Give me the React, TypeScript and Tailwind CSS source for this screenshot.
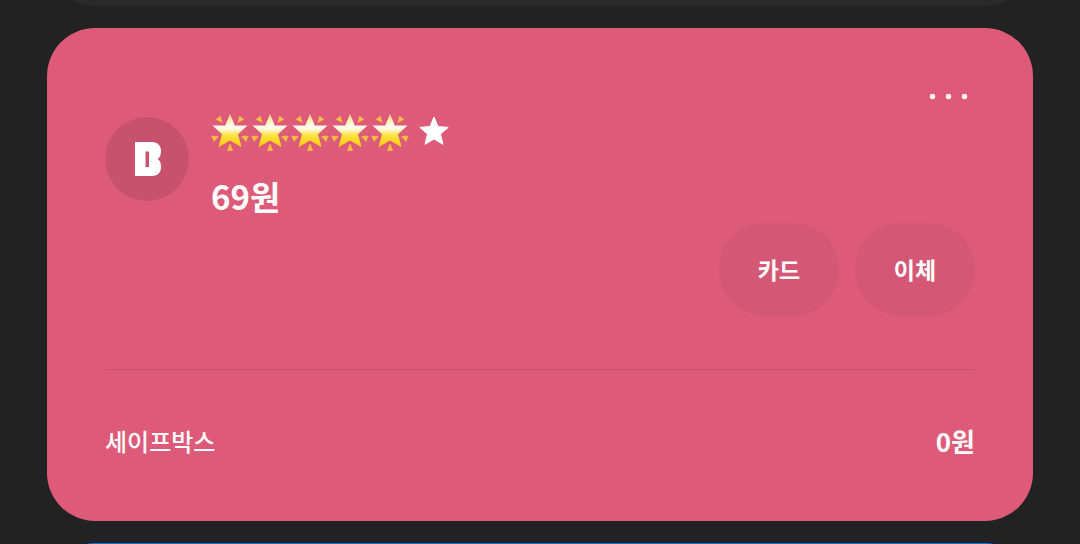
import React from "react";

const BankLogo: React.FC = () => (
  <svg width="28" height="34" viewBox="0 0 28 34" fill="#fff" aria-hidden="true">
    <path
      fillRule="evenodd"
      d="M2 0H19C25 0 28 4 28 9C28 13 27 15.500 24.500 17C27 18.500 28 21 28 25C28 30 25 34 19 34H2ZM12.500 9.500V25H16V9.500Z"
    />
  </svg>
);

const GlowingStar: React.FC = () => (
  <svg width="38" height="40" viewBox="0 0 38 40" aria-hidden="true">
    <defs>
      <linearGradient id="starFill" x1="0" y1="0" x2="0" y2="1">
        <stop offset="0" stopColor="#ffd65a" />
        <stop offset="0.2" stopColor="#fff0b8" />
        <stop offset="0.42" stopColor="#fffdf4" />
        <stop offset="0.65" stopColor="#ffe23a" />
        <stop offset="1" stopColor="#fdc90d" />
      </linearGradient>
    </defs>
    <path
      d="M19 2L23.800 13.500H36.500L27 22.200L30.600 35.300L19 28.400L7.400 35.300L11 22.200L1.500 13.500H14.200Z"
      fill="url(#starFill)"
    />
    <g fill="#fbbb45" stroke="#fbbb45" strokeWidth="0.4" strokeLinejoin="round">
      <path d="M5 7.500L9.300 4L11.300 10.500Z" />
      <path d="M33 7.500L28.700 4L26.700 10.500Z" />
      <path d="M0.600 24L7.600 24.300L3 29.600Z" />
      <path d="M37.400 24L30.400 24.300L35 29.600Z" />
      <path d="M19 32L21.800 38.700H16.200Z" />
    </g>
  </svg>
);

const FavoriteStar: React.FC = () => (
  <svg width="30" height="30" viewBox="0 0 30 30" fill="#fff" stroke="#fff" strokeLinejoin="round" aria-hidden="true">
    <path d="M15 0L19 9.500L29.200 10.400L21.500 17L24 27.300L15 22L6 27.300L8.500 17L0.800 10.400L11 9.500Z" />
  </svg>
);

const App: React.FC = () => {
  const actions = ["카드", "이체"];

  return (
    <main className="h-screen overflow-hidden bg-[#222222] px-[47px] text-white font-['Noto_Sans_CJK_KR','Noto_Sans',sans-serif]">
      {/* end of the card above */}
      <div className="-mt-[90px] h-24 rounded-[48px] bg-[#2a2a2a]" />

      <section className="mt-[22px] rounded-[48px] bg-[#dd5b79] px-[58px] pt-[58px] pb-[60px]">
        <div className="flex items-start">
          <div className="mt-[31px] flex size-[84px] shrink-0 items-center justify-center rounded-full bg-[#c8526e]">
            <BankLogo />
          </div>

          <div className="mt-[26px] ml-[22px] grow">
            <div className="flex h-10 items-center gap-[2px]">
              {[0, 1, 2, 3, 4].map((i) => (
                <GlowingStar key={i} />
              ))}
              <button type="button" aria-label="즐겨찾기" className="ml-2">
                <FavoriteStar />
              </button>
            </div>
            <p className="mt-5 mb-[3px] text-[33px] leading-[48px] font-bold">69원</p>
          </div>

          <button type="button" aria-label="더보기">
            <svg width="46" height="22" viewBox="0 0 46 22" fill="#fff" aria-hidden="true">
              <circle cx="3.500" cy="10.500" r="2.700" />
              <circle cx="19.500" cy="10.500" r="2.700" />
              <circle cx="35.500" cy="10.500" r="2.700" />
            </svg>
          </button>
        </div>

        <div className="flex justify-end gap-4">
          {actions.map((label) => (
            <button
              key={label}
              type="button"
              className="h-[93px] w-[120px] rounded-full bg-[#d45776] text-[23px] font-bold"
            >
              {label}
            </button>
          ))}
        </div>

        <div className="mt-[53px] flex items-center justify-between border-t border-[#c9506e] pt-[51px]">
          <span className="text-2xl leading-10 font-medium">세이프박스</span>
          <span className="text-[26px] leading-10 font-bold">0원</span>
        </div>
      </section>

      {/* start of the card below */}
      <div className="mt-[21px] h-24 rounded-[48px] border-t border-[#0c2348] bg-[#2c69bd]" />
    </main>
  );
};

export default App;
